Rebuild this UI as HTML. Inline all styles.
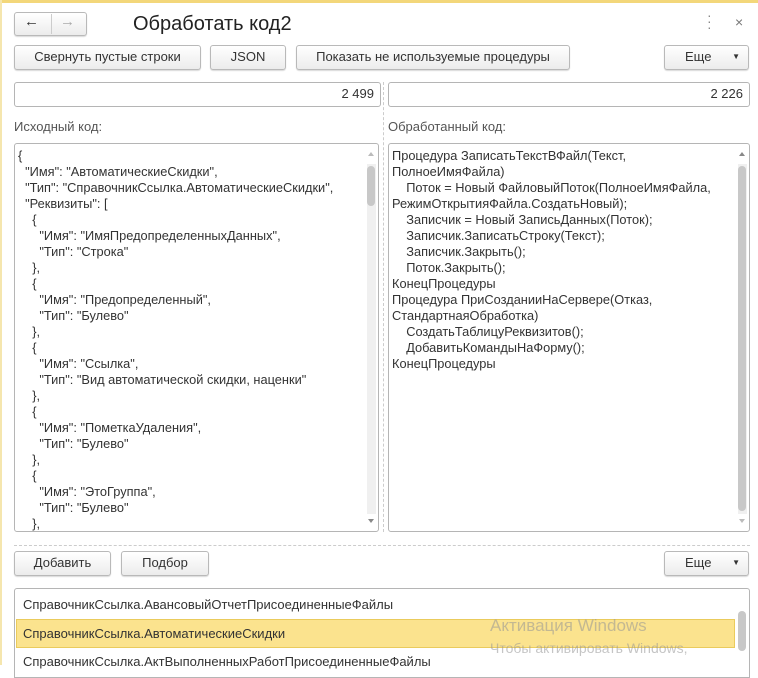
<!DOCTYPE html><html><head><meta charset="utf-8"><style>
*{box-sizing:border-box;margin:0;padding:0}
body{width:758px;height:665px;overflow:hidden;background:#fff;font-family:"Liberation Sans",Arial,sans-serif;font-size:13px;color:#333;position:relative}
.a{position:absolute}
.btn{position:absolute;border:1px solid #b9b9b9;border-radius:3px;background:linear-gradient(#fff,#ececec);box-shadow:0 1px 1px rgba(0,0,0,.15);text-align:center;line-height:22px;color:#333;font-size:13px}
.fld{position:absolute;border:1px solid #b5b5b5;border-radius:3px;background:#fff;text-align:right;padding-right:6px;line-height:22px;color:#333}
.ta{position:absolute;border:1px solid #b5b5b5;border-radius:3px;background:#fff;overflow:hidden}
.code{position:absolute;left:3px;top:4px;white-space:pre;line-height:16px;color:#333;font-size:12.8px}
.sb{position:absolute;width:9px;background:#f0f0f0}
.th{position:absolute;width:8px;border-radius:4px;background:#c8c8c8}
.arr{position:absolute;width:0;height:0;border-left:3px solid transparent;border-right:3px solid transparent}
.lbl{position:absolute;color:#555;font-size:13px}
</style></head><body>
<div class="a" style="left:0;top:0;width:758px;height:3px;background:#f3d77a"></div>
<div class="a" style="left:0;top:0;width:2px;height:665px;background:#f5e6ae"></div>
<div class="btn" style="left:14px;top:12px;width:73px;height:24px"></div>
<div class="a" style="left:51px;top:14px;width:1px;height:20px;background:#ccc"></div>
<div class="a" style="left:24px;top:13px;font-size:15px;color:#333;font-weight:bold">&#8592;</div>
<div class="a" style="left:60px;top:13px;font-size:15px;color:#aaa;font-weight:bold">&#8594;</div>
<div class="a" style="left:133px;top:13px;font-size:20px;color:#222">Обработать код2</div>
<div class="a" style="left:707px;top:12px;color:#888;font-size:14px;line-height:6px">·<br>·<br>·</div>
<div class="a" style="left:735px;top:14px;color:#777;font-size:14px">×</div>
<div class="btn" style="left:14px;top:45px;width:187px;height:25px">Свернуть пустые строки</div>
<div class="btn" style="left:210px;top:45px;width:76px;height:25px">JSON</div>
<div class="btn" style="left:296px;top:45px;width:274px;height:25px">Показать не используемые процедуры</div>
<div class="btn" style="left:664px;top:45px;width:85px;height:25px;text-align:left;padding-left:20px">Еще<span style="position:absolute;right:8px;font-size:8px">▼</span></div>
<div class="fld" style="left:14px;top:82px;width:367px;height:25px">2 499</div>
<div class="fld" style="left:388px;top:82px;width:362px;height:25px">2 226</div>
<div class="a" style="left:383px;top:82px;height:450px;border-left:1px dashed #ccc"></div>
<div class="lbl" style="left:14px;top:119px">Исходный код:</div>
<div class="lbl" style="left:388px;top:119px">Обработанный код:</div>
<div class="ta" style="left:14px;top:143px;width:365px;height:389px">
<div class="code">{
  "Имя": "АвтоматическиеСкидки",
  "Тип": "СправочникСсылка.АвтоматическиеСкидки",
  "Реквизиты": [
    {
      "Имя": "ИмяПредопределенныхДанных",
      "Тип": "Строка"
    },
    {
      "Имя": "Предопределенный",
      "Тип": "Булево"
    },
    {
      "Имя": "Ссылка",
      "Тип": "Вид автоматической скидки, наценки"
    },
    {
      "Имя": "ПометкаУдаления",
      "Тип": "Булево"
    },
    {
      "Имя": "ЭтоГруппа",
      "Тип": "Булево"
    },</div>
<div class="sb" style="left:352px;top:20px;height:350px"></div>
<div class="th" style="left:352px;top:22px;height:40px"></div>
<div class="arr" style="left:353px;top:8px;border-bottom:4px solid #bbb"></div>
<div class="arr" style="left:353px;top:375px;border-top:4px solid #888"></div>
</div>
<div class="ta" style="left:388px;top:143px;width:362px;height:389px">
<div class="code">Процедура ЗаписатьТекстВФайл(Текст,
ПолноеИмяФайла)
    Поток = Новый ФайловыйПоток(ПолноеИмяФайла,
РежимОткрытияФайла.СоздатьНовый);
    Записчик = Новый ЗаписьДанных(Поток);
    Записчик.ЗаписатьСтроку(Текст);
    Записчик.Закрыть();
    Поток.Закрыть();
КонецПроцедуры
Процедура ПриСозданииНаСервере(Отказ,
СтандартнаяОбработка)
    СоздатьТаблицуРеквизитов();
    ДобавитьКомандыНаФорму();
КонецПроцедуры</div>
<div class="sb" style="left:349px;top:20px;height:350px"></div>
<div class="th" style="left:349px;top:22px;height:345px"></div>
<div class="arr" style="left:350px;top:8px;border-bottom:4px solid #888"></div>
<div class="arr" style="left:350px;top:375px;border-top:4px solid #bbb"></div>
</div>
<div class="a" style="left:14px;top:545px;width:736px;border-top:1px dashed #ccc"></div>
<div class="btn" style="left:14px;top:551px;width:97px;height:25px">Добавить</div>
<div class="btn" style="left:121px;top:551px;width:88px;height:25px">Подбор</div>
<div class="btn" style="left:664px;top:551px;width:85px;height:25px;text-align:left;padding-left:20px">Еще<span style="position:absolute;right:8px;font-size:8px">▼</span></div>
<div class="ta" style="left:14px;top:588px;width:736px;height:90px;border-radius:3px 3px 0 0">
<div class="a" style="left:8px;top:8px">СправочникСсылка.АвансовыйОтчетПрисоединенныеФайлы</div>
<div class="a" style="left:1px;top:30px;width:719px;height:29px;background:#fbe38e;border:1px solid #eacb5c"></div>
<div class="a" style="left:8px;top:37px">СправочникСсылка.АвтоматическиеСкидки</div>
<div class="a" style="left:8px;top:65px">СправочникСсылка.АктВыполненныхРаботПрисоединенныеФайлы</div>
<div class="th" style="left:723px;top:22px;height:40px"></div>
</div>
<div class="a" style="left:490px;top:616px;font-size:17px;color:rgba(150,150,150,.55)">Активация Windows</div>
<div class="a" style="left:490px;top:640px;font-size:14px;color:rgba(150,150,150,.55)">Чтобы активировать Windows,</div>
</body></html>
